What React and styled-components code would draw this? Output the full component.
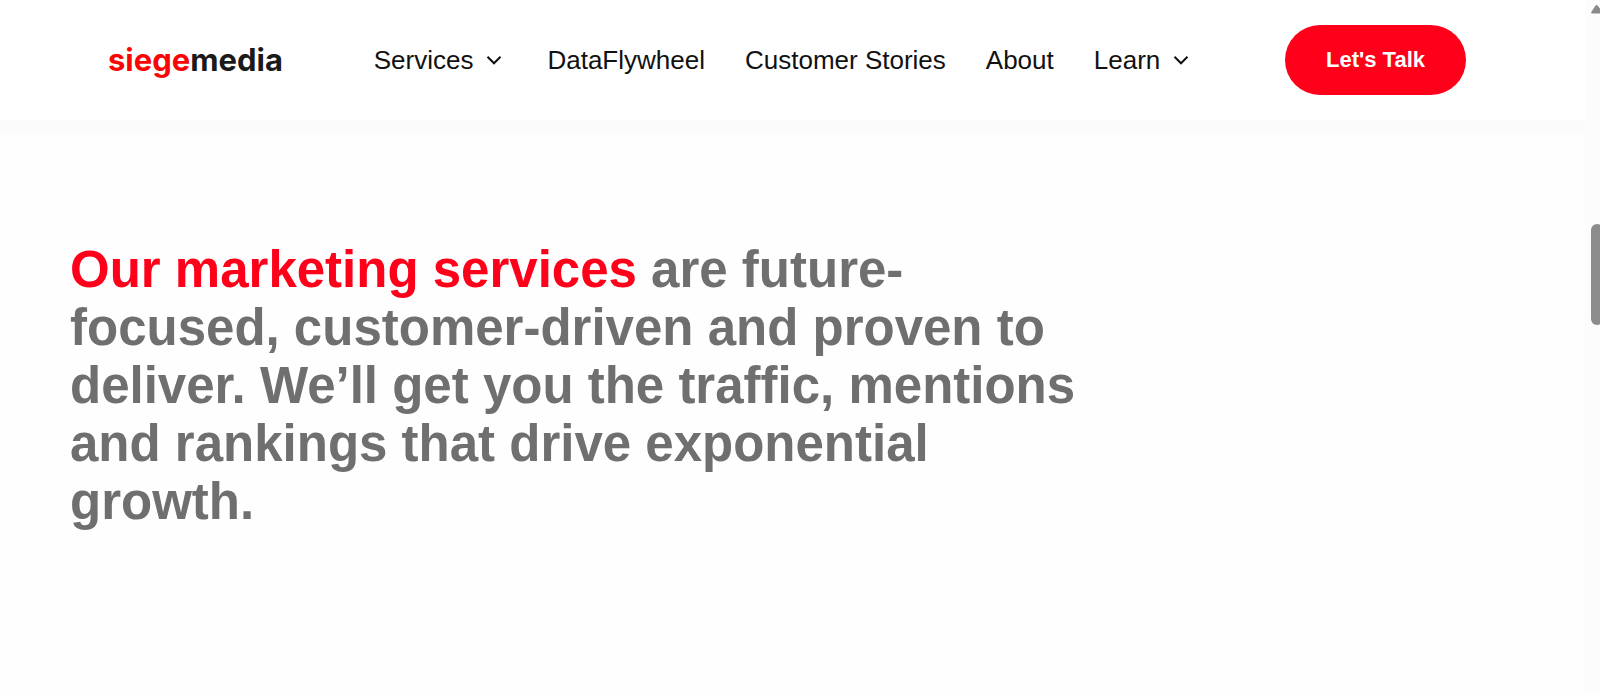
import React, { useState } from "react";
import styled, { createGlobalStyle } from "styled-components";
import { ChevronDown } from "lucide-react";

const links = [
  { label: "Services", menu: true },
  { label: "DataFlywheel" },
  { label: "Customer Stories" },
  { label: "About" },
  { label: "Learn", menu: true },
];

const NavItem = ({ label, menu }) => {
  const [isOpen, setIsOpen] = useState(false);

  if (!menu) {
    return <NavLink href="#">{label}</NavLink>;
  }

  return (
    <NavButton
      type="button"
      aria-expanded={isOpen}
      onClick={() => setIsOpen(!isOpen)}
    >
      {label}
      <Chevron size={26} strokeWidth={2} absoluteStrokeWidth />
    </NavButton>
  );
};

const App = () => {
  return (
    <Page>
      <GlobalStyle />
      <Content>
        <Header>
          <Logo href="#">
            <Red>siege</Red>media
          </Logo>
          <Nav>
            {links.map((link) => (
              <NavItem key={link.label} {...link} />
            ))}
          </Nav>
          <TalkButton type="button">Let's Talk</TalkButton>
        </Header>
        <Intro>
          <Heading>
            <Highlight>Our marketing services</Highlight> are future-focused,
            customer-driven and proven to deliver. We’ll get you the traffic,
            mentions and rankings that drive exponential growth.
          </Heading>
        </Intro>
      </Content>
      <ScrollTrack>
        <ScrollArrow width="14" height="10" viewBox="0 0 14 10">
          <path d="M1.2 9.5 Q-.6 9.5 .6 7.6 L4.2 2 Q5.6 0 7 2 L11.4 7.6 Q13 9.5 11.4 9.5 Z" />
        </ScrollArrow>
        <ScrollThumb />
      </ScrollTrack>
    </Page>
  );
};

const GlobalStyle = createGlobalStyle`
  * {
    box-sizing: border-box;
  }
  body {
    margin: 0;
    background: #fefefe;
    font-family: "Liberation Sans", Arial, sans-serif;
  }
`;

const Page = styled.div`
  display: flex;
  min-height: 100vh;
`;

const Content = styled.div`
  flex: 1;
  min-width: 0;
  overflow: hidden;
`;

const Header = styled.header`
  display: flex;
  align-items: center;
  justify-content: space-between;
  padding: 25px 119px 25px 108px;
  background: #ffffff;
  box-shadow: 0 6px 10px 6px rgba(0, 0, 0, 0.02);
`;

const Logo = styled.a`
  font-family: Inter, sans-serif;
  font-size: 31px;
  font-weight: 700;
  line-height: 40px;
  color: #1a1a1a;
  text-decoration: none;
`;

const Red = styled.span`
  color: #fa0505;
`;

const Nav = styled.nav`
  display: flex;
  align-items: center;
  gap: 40px;
`;

const NavLink = styled.a`
  font-size: 26px;
  line-height: 32px;
  color: #111111;
  text-decoration: none;
  white-space: nowrap;
`;

const NavButton = styled.button`
  display: flex;
  align-items: center;
  gap: 8px;
  padding: 0;
  border: none;
  background: transparent;
  font-family: inherit;
  font-size: 26px;
  line-height: 32px;
  color: #111111;
  cursor: pointer;
`;

const Chevron = styled(ChevronDown)`
  stroke-linecap: butt;
  stroke-linejoin: miter;
`;

const TalkButton = styled.button`
  padding: 20px 41px;
  border: none;
  border-radius: 35px;
  background: #ff001a;
  color: #ffffff;
  font-family: inherit;
  font-size: 22px;
  font-weight: 700;
  line-height: 30px;
  white-space: nowrap;
  cursor: pointer;
`;

const Intro = styled.main`
  padding: 121px 70px;
`;

const Heading = styled.h2`
  max-width: 1024px;
  margin: 0;
  font-size: 51px;
  font-weight: 700;
  line-height: 58px;
  font-variant-ligatures: none;
  color: #6f6f6f;
`;

const Highlight = styled.span`
  color: #ff001a;
`;

const ScrollTrack = styled.div`
  width: 15px;
  padding: 4px 0 0 6px;
  overflow: hidden;
  background: #fcfcfc;
`;

const ScrollArrow = styled.svg`
  display: block;
  fill: #8a8a8a;
`;

const ScrollThumb = styled.div`
  width: 12px;
  height: 101px;
  margin-top: 210px;
  border-radius: 6px;
  background: #8c8c8a;
`;

export default App;
